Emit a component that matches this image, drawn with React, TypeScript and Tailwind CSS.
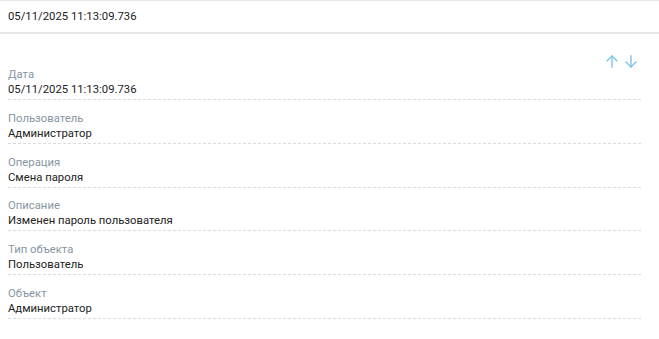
const fields = [
  { label: 'Дата', value: '05/11/2025 11:13:09.736' },
  { label: 'Пользователь', value: 'Администратор' },
  { label: 'Операция', value: 'Смена пароля' },
  { label: 'Описание', value: 'Изменен пароль пользователя' },
  { label: 'Тип объекта', value: 'Пользователь' },
  { label: 'Объект', value: 'Администратор' },
];

function Arrow({ down }: { down?: boolean }) {
  return (
    <svg width="12" height="13" viewBox="0 0 12 13" fill="none" stroke="currentColor" strokeWidth="1.4" strokeLinecap="round" strokeLinejoin="round">
      {down ? (
        <>
          <path d="M6 0.8V12" />
          <path d="M1 7l5 5 5-5" />
        </>
      ) : (
        <>
          <path d="M6 12.2V1" />
          <path d="M1 6l5-5 5 5" />
        </>
      )}
    </svg>
  );
}

export default function App() {
  return (
    <div className="w-[659px] h-[339px] bg-white font-['Roboto',sans-serif] text-[11.3px] text-[#222]">
      {/* Header */}
      <div className="h-[34px] border-t border-b-2 border-[#e6e6e6] flex items-center px-2">
        <span className="leading-[15px]">05/11/2025 11:13:09.736</span>
      </div>

      {/* Toolbar */}
      <div className="flex justify-end gap-[7px] pr-[22px] mt-[21px] h-[13px] mb-[-1px] text-[#7cc4df]">
        <Arrow />
        <Arrow down />
      </div>

      {/* Fields */}
      <div className="pl-2 pr-[18px]">
        {fields.map((f) => (
          <div key={f.label} className="pb-[2px] mb-[10.8px] border-b border-dashed border-[#dcdcdc]">
            <div className="leading-[15px] text-[#8795a3]">{f.label}</div>
            <div className="leading-[15px]">{f.value}</div>
          </div>
        ))}
      </div>
    </div>
  );
}
